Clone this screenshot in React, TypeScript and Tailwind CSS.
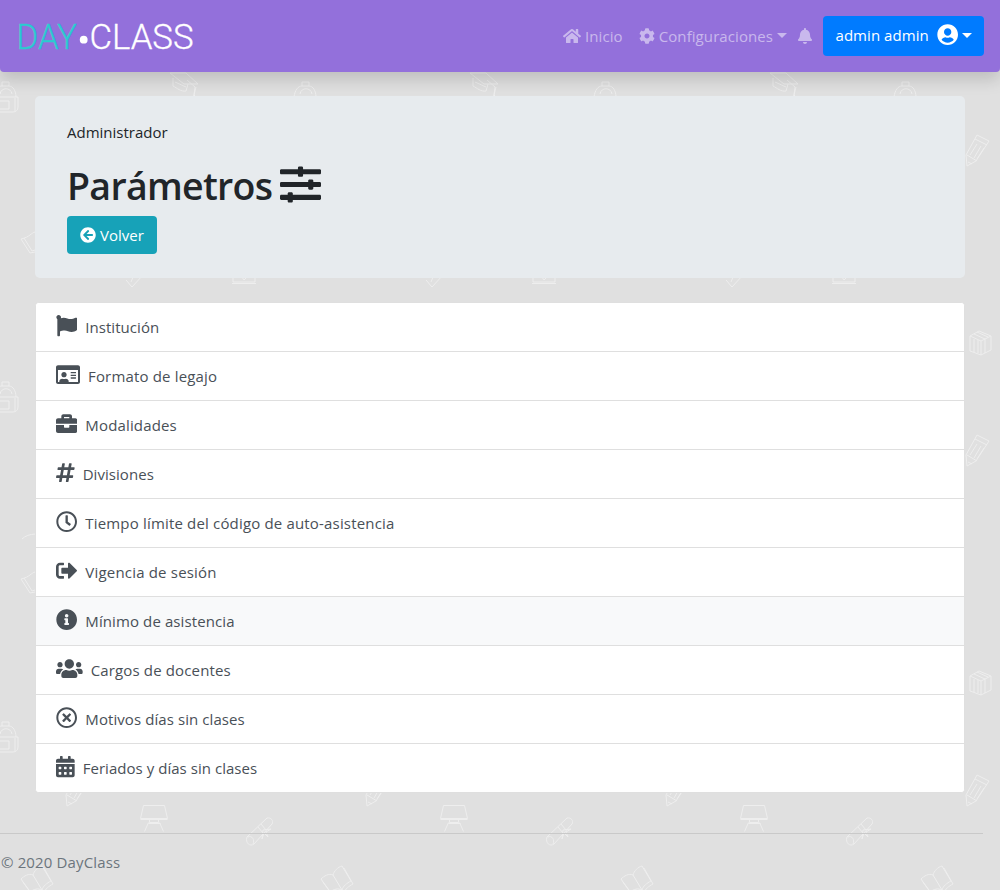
import type { ReactNode } from 'react';
import type { IconType } from 'react-icons';
import {
  FaArrowCircleLeft,
  FaBell,
  FaBriefcase,
  FaCalendarAlt,
  FaCog,
  FaFlag,
  FaHashtag,
  FaHome,
  FaInfoCircle,
  FaRegClock,
  FaRegIdCard,
  FaRegTimesCircle,
  FaSignOutAlt,
  FaSlidersH,
  FaUserCircle,
  FaUsers,
} from 'react-icons/fa';

type Item = { label: string; icon: IconType; iconClass: string; textClass: string; active?: boolean };

const items: Item[] = [
  { label: 'Institución', icon: FaFlag, iconClass: 'w-[21.33px]', textClass: 'tracking-[0.04px]' },
  { label: 'Formato de legajo', icon: FaRegIdCard, iconClass: 'w-6', textClass: 'tracking-[0.17px]' },
  { label: 'Modalidades', icon: FaBriefcase, iconClass: 'w-[21.33px]', textClass: 'tracking-[0.15px]' },
  { label: 'Divisiones', icon: FaHashtag, iconClass: 'w-[18.67px]', textClass: 'tracking-[0.05px]' },
  { label: 'Tiempo límite del código de auto-asistencia', icon: FaRegClock, iconClass: 'w-[21.33px]', textClass: 'tracking-[0.17px]' },
  { label: 'Vigencia de sesión', icon: FaSignOutAlt, iconClass: 'w-[21.33px]', textClass: 'tracking-[0.19px]' },
  { label: 'Mínimo de asistencia', icon: FaInfoCircle, iconClass: 'w-[21.33px]', textClass: 'tracking-[0.1px]', active: true },
  { label: 'Cargos de docentes', icon: FaUsers, iconClass: 'w-[26.67px]', textClass: 'tracking-[0.15px]' },
  { label: 'Motivos días sin clases', icon: FaRegTimesCircle, iconClass: 'w-[21.33px]', textClass: 'tracking-[0.08px]' },
  { label: 'Feriados y días sin clases', icon: FaCalendarAlt, iconClass: 'w-[18.67px]', textClass: 'tracking-[0.04px]' },
];

const columns = [0, 300, 600, 900];

function Backpack() {
  return (
    <path d="M2 4V0h7v4M-6 15C-5 8-2 4 2 4h7c4 0 7 5 7 11M-6 15h24v10c0 3-2 5-5 5H-6M0 12c1-7 11-7 12 0M-1 19H9v8H-1zM15 16v13" />
  );
}

function Pencil() {
  return <path d="M11 0l12 6-13 20-9 5-1-11zM9 4l12 6M1 20l10 6M2 27l4 2M11 9L4 20M15 11L8 23M18 13l-7 11" />;
}

function Book() {
  return <path d="M0 13c3-3 8-6 12-4 1-4 5-8 9-9l9 15c-4 2-8 5-9 9-4-2-8-1-12 2zM12 9l9 15M2 16l9 12c4-3 8-3 12-1 1-4 5-7 9-9L23 2" />;
}

function Doodles() {
  return (
    <svg className="pointer-events-none absolute inset-0" width="1000" height="890" fill="none" stroke="#eeeeee" strokeWidth="1" strokeLinejoin="round">
      {columns.map((x) => (
        <g key={x} transform={`translate(${x} 0)`}>
          <path transform="translate(169 73)" d="M1 0h16l12 11H15zM4 5v8c4 2 8 6 13 5l2-7M6 9l11 5M18 7l8 7-1 8 2-8M25 22l-2 4 4-2z" />
          <g transform="translate(0 82)"><Backpack /></g>
          <path d="M126 280l6 7 11-12M133 277l-2 5M233 270v12h22v-12M232 283.5h24M238 277h4l2 3 3-3" />
          <g transform="translate(66 775)"><Pencil /></g>
          <path transform="translate(140.5 805.5)" d="M3 0h21l3 13H0zM0 14h27M9 14v3h9v-3M8 17L4 26M19 17l4 9M8 18h12" />
          <path transform="translate(245 817)" d="M2 20L22 1c4-1 7 3 5 6L9 27c-4 3-9-1-7-7zM3 20c4-2 7 3 5 7M13 10l5 6M16 7l5 6M18 13l8-1-5 3 2 5-4-4-2 6z" />
          <g transform="translate(21 866)"><Book /></g>
        </g>
      ))}
      {[382, 722].map((y) => (
        <g key={y} transform={`translate(0 ${y})`}><Backpack /></g>
      ))}
      {[135, 435].map((y) => (
        <g key={y} transform={`translate(966 ${y})`}><Pencil /></g>
      ))}
      {[331, 671].map((y) => (
        <path key={y} transform={`translate(970 ${y})`} d="M0 5l9-5 12 5v14l-10 5-11-4zM0 5l11 5 10-5M11 10v14M4 3l11 5v14M7 1l11 5M4 8v13M8 9v13" />
      ))}
      {[232, 572].map((y) => (
        <path key={y} transform={`translate(21 ${y})`} d="M14 0C10 1 9 5 0 7l9 14 5-1M3 6l8 13 3-1" />
      ))}
      <path d="M22 539c3-3 8-5 14-5" />
    </svg>
  );
}

function Caret() {
  return <span className="mb-0.5 block border-x-[5px] border-t-[5px] border-x-transparent border-t-current" />;
}

function NavLink({ children, className }: { children: ReactNode; className: string }) {
  return <a className={`flex items-center text-white/50 ${className}`}>{children}</a>;
}

export default function App() {
  return (
    <div className="relative h-[890px] w-[1000px] overflow-hidden bg-[#e0e0e0] font-['Open_Sans','Noto_Sans',sans-serif] text-[15px] leading-6 text-[#212529]">
      <Doodles />
      <header className="relative flex h-[72px] items-center rounded-b bg-[#9370db] px-4 shadow-[0_8px_16px_rgba(0,0,0,0.15)]">
        <svg width="190" height="56" viewBox="16 8 190 56" className="overflow-visible font-[Roboto,sans-serif] font-light">
          <text x="16.5" y="48.8" fontSize="34.5" textLength="60.5" lengthAdjust="spacingAndGlyphs" fill="#2bcbd0" stroke="#2bcbd0" strokeWidth="0.3">DAY</text>
          <circle cx="83.7" cy="39.7" r="3.9" fill="#fff" />
          <text x="89.5" y="48.8" fontSize="34.5" textLength="104" lengthAdjust="spacingAndGlyphs" fill="#fff" stroke="#fff" strokeWidth="0.3">CLASS</text>
        </svg>
        <nav className="ml-auto flex items-center">
          <NavLink className="mr-4">
            <FaHome className="mr-1 h-[18px] w-[18px]" />
            <span className="tracking-[0.1px]">Inicio</span>
          </NavLink>
          <NavLink className="mr-[10px]">
            <FaCog className="mr-1 size-4" />
            <span className="mr-1 tracking-[0.08px]">Configuraciones</span>
            <Caret />
          </NavLink>
          <NavLink className="mr-[10px]">
            <FaBell className="h-4 w-4" />
          </NavLink>
          <button className="flex h-10 w-[161px] items-center rounded bg-[#007bff] pl-[12.5px] text-white">
            <span className="mr-2 mb-0.5 tracking-[0.05px]">admin admin</span>
            <FaUserCircle className="mr-1 mb-[3px] size-[21.33px]" />
            <Caret />
          </button>
        </nav>
      </header>

      <section className="relative mx-[35px] mt-6 flex h-[182px] flex-col items-start rounded-[5px] bg-[#e7ebee] px-8 pt-6">
        <p>Administrador</p>
        <h1 className="mt-4 flex h-12 items-center text-[37.5px] leading-[48px] font-semibold">
          <span className="pt-[3px] tracking-[-0.7px]">Parámetros</span>
          <FaSlidersH className="ml-2 size-[41px]" />
        </h1>
        <button className="mt-2 flex h-[38px] w-[90px] items-center rounded bg-[#17a2b8] pl-[13px] text-white">
          <FaArrowCircleLeft className="mr-1 size-4" />
          Volver
        </button>
      </section>

      <ul className="relative mx-[35px] mt-6 overflow-hidden rounded border border-[#dfdfdf] bg-white text-[#495057]">
        {items.map(({ label, icon: Icon, iconClass, textClass, active }) => (
          <li key={label} className={`flex h-[49px] items-center border-b border-[#dfdfdf] px-5 last:h-12 last:border-b-0 ${active ? 'bg-[#f8f9fa]' : 'bg-white'}`}>
            <Icon className={`mr-2 mb-[2px] h-[21.33px] ${iconClass}`} />
            <span className={textClass}>{label}</span>
          </li>
        ))}
      </ul>

      <footer className="relative mt-10 mr-[17px] border-t border-[#c9c9c9] pt-4 pl-px text-[#6c757d]">
        <p className="tracking-[0.14px]">© 2020 DayClass</p>
      </footer>
    </div>
  );
}
